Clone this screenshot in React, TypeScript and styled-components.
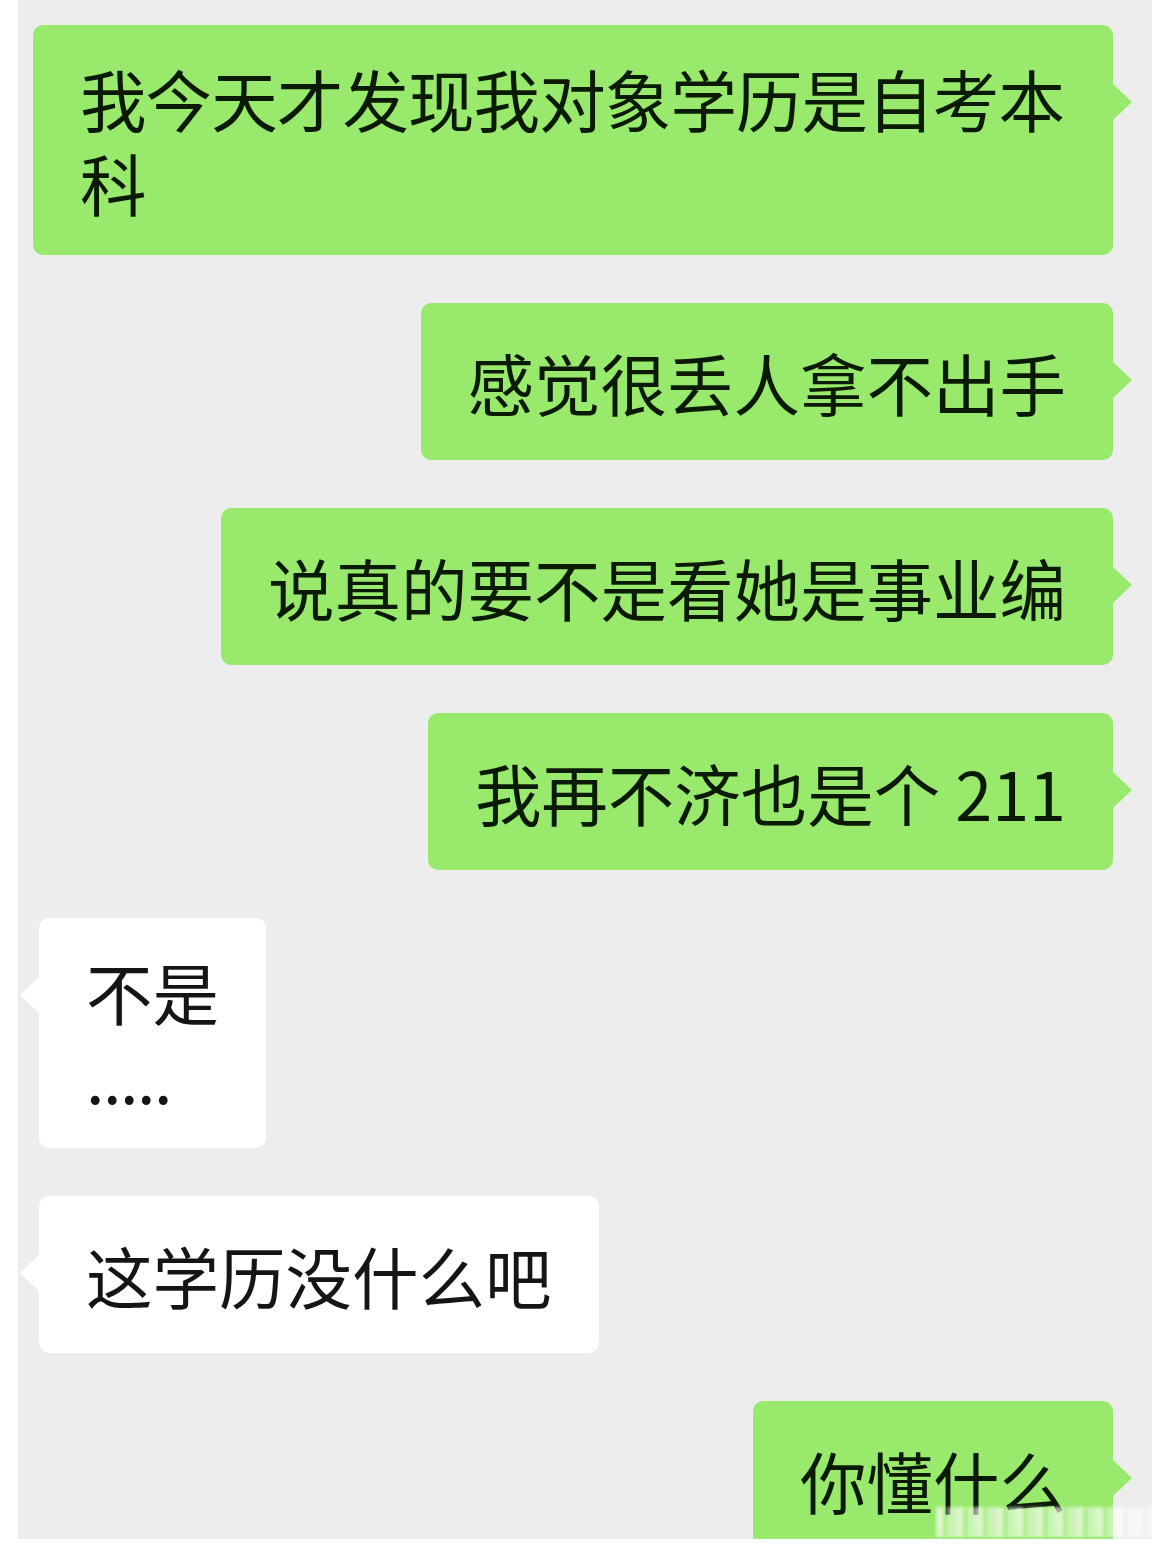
import styled, { createGlobalStyle, css } from 'styled-components'

const GlobalStyle = createGlobalStyle`
  html,
  body {
    margin: 0;
    padding: 0;
    background: #ffffff;
  }

  body {
    font-family: 'Noto Sans CJK SC', 'Noto Sans', sans-serif;
    -webkit-font-smoothing: antialiased;
  }
`

const ChatScreen = styled.div`
  position: relative;
  margin: 0 18px;
  height: 1539px;
  background: #ededed;
  overflow: hidden;
`

const MessageList = styled.div`
  display: flex;
  flex-direction: column;
  gap: 48px;
  padding-top: 25px;
`

const MessageRow = styled.div<{ $mine: boolean }>`
  display: flex;
  justify-content: ${({ $mine }) => ($mine ? 'flex-end' : 'flex-start')};
  padding: ${({ $mine }) => ($mine ? '0 39px 0 0' : '0 0 0 21px')};
`

const Bubble = styled.div<{ $mine: boolean }>`
  position: relative;
  box-sizing: border-box;
  display: flex;
  align-items: center;
  max-width: 1080px;
  min-height: 157px;
  padding: 31px 47px;
  border-radius: 10px;
  background: ${({ $mine }) => ($mine ? '#98e96c' : '#ffffff')};
  color: ${({ $mine }) => ($mine ? '#0b1a04' : '#151515')};

  &::after {
    content: '';
    position: absolute;
    top: 58px;
    width: 20px;
    height: 38px;
    background: inherit;
    ${({ $mine }) =>
      $mine
        ? css`
            right: -19px;
            clip-path: polygon(0 0, 100% 50%, 0 100%);
          `
        : css`
            left: -19px;
            clip-path: polygon(100% 0, 0 50%, 100% 100%);
          `}
  }
`

// 长消息换行时字距略紧一些
const MessageText = styled.p<{ $tight?: boolean }>`
  margin: 0;
  font-size: 66.5px;
  line-height: 84px;
  font-weight: 400;
  letter-spacing: ${({ $tight }) => ($tight ? '-0.9px' : '0')};
  word-break: break-all;
`

const Ellipsis = styled.span`
  letter-spacing: -1.5px;
`

// 底部被压糊的水印
const Watermark = styled.div`
  position: absolute;
  right: -4px;
  bottom: 2px;
  width: 220px;
  height: 30px;
  background: repeating-linear-gradient(
    90deg,
    rgba(255, 255, 255, 0.8) 0 7px,
    rgba(255, 255, 255, 0.3) 7px 12px,
    rgba(255, 255, 255, 0.65) 12px 20px
  );
  filter: blur(1.5px);
  opacity: 0.8;
`

type Message = {
  mine: boolean
  tight?: boolean
  lines: React.ReactNode[]
}

const messages: Message[] = [
  { mine: true, tight: true, lines: ['我今天才发现我对象学历是自考本科'] },
  { mine: true, lines: ['感觉很丢人拿不出手'] },
  { mine: true, lines: ['说真的要不是看她是事业编'] },
  { mine: true, lines: ['我再不济也是个 211'] },
  { mine: false, lines: ['不是', <Ellipsis key="dots">.....</Ellipsis>] },
  { mine: false, lines: ['这学历没什么吧'] },
  { mine: true, lines: ['你懂什么'] },
]

function App() {
  return (
    <>
      <GlobalStyle />
      <ChatScreen>
        <MessageList>
          {messages.map((msg, i) => (
            <MessageRow key={i} $mine={msg.mine}>
              <Bubble $mine={msg.mine}>
                <MessageText $tight={msg.tight}>
                  {msg.lines.map((line, j) => (
                    <span key={j}>
                      {j > 0 && <br />}
                      {line}
                    </span>
                  ))}
                </MessageText>
              </Bubble>
            </MessageRow>
          ))}
        </MessageList>
        <Watermark />
      </ChatScreen>
    </>
  )
}

export default App
